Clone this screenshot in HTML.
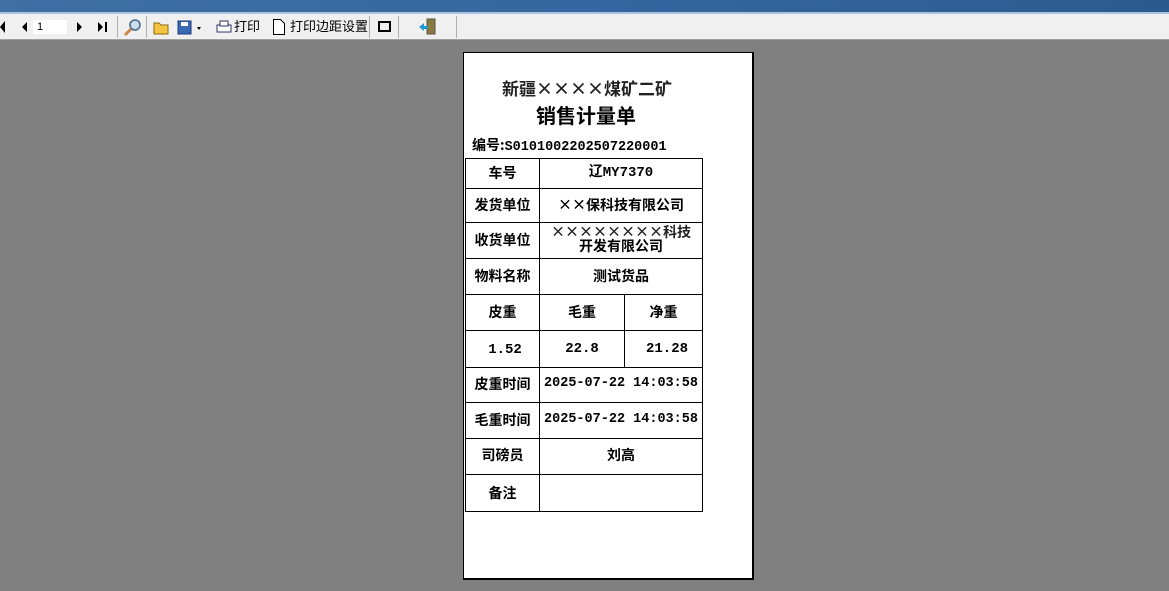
<!DOCTYPE html>
<html><head><meta charset="utf-8"><style>
*{margin:0;padding:0;box-sizing:border-box}
body{width:1169px;height:591px;background:#808080;position:relative;overflow:hidden;font-family:"Liberation Sans","SimSun","Noto Sans CJK SC",sans-serif}
.top{position:absolute;left:0;top:0;width:1169px;height:12px;background:linear-gradient(90deg,#3f6fa3,#3567a0 50%,#2c5a8e)}
.hl{position:absolute;left:0;top:12px;width:1169px;height:2px;background:#a9c3e0}
.tb{position:absolute;left:0;top:14px;width:1169px;height:26px;background:#f0f0f0;border-bottom:1px solid #a0a0a0}
.t{position:absolute;font-size:13px;color:#000;top:18px;font-family:"Noto Sans CJK SC",sans-serif;line-height:16px}
.sep{position:absolute;top:16px;width:1px;height:22px;background:#b0b0b0}
.page{position:absolute;left:463px;top:52px;width:291px;height:528px;background:#fff;border:1px solid #000;border-right:2px solid #000;border-bottom:2px solid #000}
.c{position:absolute;font-family:"Noto Sans CJK SC","WenQuanYi Zen Hei",sans-serif;font-weight:bold;font-size:14px;color:#000;text-align:center;line-height:16px}
.m{font-family:"Liberation Mono","Noto Sans CJK SC",monospace;font-weight:bold;font-size:14px}
.h{position:absolute;height:1px;background:#000}
.v{position:absolute;width:1px;background:#000}
</style></head><body>
<div class="top"></div><div class="hl"></div><div class="tb"></div>
<svg style="position:absolute;left:0;top:18px" width="120" height="18">
<polygon points="5,3 0,9 5,15" fill="#000"/>
<polygon points="27,4 22,9 27,14" fill="#000"/>
<polygon points="77,4 82,9 77,14" fill="#000"/>
<polygon points="98,4 103,9 98,14" fill="#000"/><rect x="105" y="4" width="2" height="10" fill="#000"/>
</svg>
<div style="position:absolute;left:33px;top:20px;width:34px;height:14px;background:#fff;font-size:11px;padding-left:4px;line-height:14px">1</div>
<div class="sep" style="left:117px"></div>
<svg style="position:absolute;left:123px;top:18px" width="20" height="18"><circle cx="12" cy="7" r="5" fill="#cde" stroke="#468" stroke-width="1.5"/><line x1="8" y1="11" x2="2" y2="17" stroke="#c84" stroke-width="3"/></svg>
<div class="sep" style="left:146px"></div>
<svg style="position:absolute;left:153px;top:20px" width="50" height="16"><path d="M1 3h5l2 2h7v9H1z" fill="#f5c542" stroke="#8a6a10"/><rect x="25" y="1" width="13" height="13" fill="#3b6ab5" stroke="#1a3a7a"/><rect x="28" y="2" width="7" height="4" fill="#fff"/><polygon points="44,7 48,7 46,10" fill="#000"/></svg>
<svg style="position:absolute;left:215px;top:19px" width="18" height="16"><rect x="2" y="6" width="14" height="7" fill="#fff" stroke="#336" /><rect x="5" y="2" width="8" height="5" fill="#fff" stroke="#336"/></svg>
<div class="t" style="left:234px">打印</div>
<svg style="position:absolute;left:272px;top:18px" width="14" height="18"><path d="M1.5 1.5h7l4 4v11h-11z" fill="#fff" stroke="#000"/></svg>
<div class="t" style="left:290px">打印边距设置</div>
<div class="sep" style="left:369px"></div>
<div style="position:absolute;left:378px;top:21px;width:13px;height:11px;border:2px solid #000"></div>
<div class="sep" style="left:398px"></div>
<svg style="position:absolute;left:418px;top:18px" width="20" height="18"><rect x="9" y="1" width="8" height="15" fill="#8a7a40" stroke="#554"/><polygon points="1,9 6,5 6,13" fill="#29c"/><rect x="5" y="8" width="5" height="3" fill="#29c"/></svg>
<div class="sep" style="left:456px"></div>

<div class="page"></div>
<div class="c" style="left:464px;top:78px;width:246px;font-size:17px;line-height:20px;color:#222">新疆××××煤矿二矿</div>
<div class="c" style="left:464px;top:104px;width:244px;font-size:20px;line-height:22px">销售计量单</div>
<div class="c" style="left:472px;top:137px;text-align:left">编号:<span class="m" style="font-size:13.5px">S0101002202507220001</span></div>

<div class="h" style="left:465px;top:158px;width:238px"></div>
<div class="h" style="left:465px;top:188px;width:238px"></div>
<div class="h" style="left:465px;top:222px;width:238px"></div>
<div class="h" style="left:465px;top:258px;width:238px"></div>
<div class="h" style="left:465px;top:294px;width:238px"></div>
<div class="h" style="left:465px;top:330px;width:238px"></div>
<div class="h" style="left:465px;top:367px;width:238px"></div>
<div class="h" style="left:465px;top:402px;width:238px"></div>
<div class="h" style="left:465px;top:438px;width:238px"></div>
<div class="h" style="left:465px;top:474px;width:238px"></div>
<div class="h" style="left:465px;top:511px;width:238px"></div>
<div class="v" style="left:465px;top:158px;height:354px"></div>
<div class="v" style="left:539px;top:158px;height:354px"></div>
<div class="v" style="left:702px;top:158px;height:354px"></div>
<div class="v" style="left:624px;top:294px;height:73px"></div>

<div class="c" style="left:466px;top:165px;width:73px">车号</div>
<div class="c m" style="left:540px;top:165px;width:162px">辽MY7370</div>
<div class="c" style="left:466px;top:197px;width:73px">发货单位</div>
<div class="c" style="left:540px;top:197px;width:162px">  ××保科技有限公司</div>
<div class="c" style="left:466px;top:232px;width:73px">收货单位</div>
<div class="c" style="left:540px;top:224px;width:162px;color:#222">××××××××科技</div>
<div class="c" style="left:540px;top:238px;width:162px">开发有限公司</div>
<div class="c" style="left:466px;top:268px;width:73px">物料名称</div>
<div class="c" style="left:540px;top:268px;width:162px">测试货品</div>
<div class="c" style="left:466px;top:304px;width:73px">皮重</div>
<div class="c" style="left:540px;top:304px;width:84px">毛重</div>
<div class="c" style="left:625px;top:304px;width:77px">净重</div>
<div class="c m" style="left:466px;top:342px;width:78px">1.52</div>
<div class="c m" style="left:540px;top:341px;width:84px">22.8</div>
<div class="c m" style="left:625px;top:341px;width:84px">21.28</div>
<div class="c" style="left:466px;top:376px;width:73px">皮重时间</div>
<div class="c m" style="left:540px;top:376px;width:162px;font-size:13.5px">2025-07-22 14:03:58</div>
<div class="c" style="left:466px;top:412px;width:73px">毛重时间</div>
<div class="c m" style="left:540px;top:412px;width:162px;font-size:13.5px">2025-07-22 14:03:58</div>
<div class="c" style="left:466px;top:447px;width:73px">司磅员</div>
<div class="c" style="left:540px;top:447px;width:162px">刘高</div>
<div class="c" style="left:466px;top:485px;width:73px">备注</div>
</body></html>
